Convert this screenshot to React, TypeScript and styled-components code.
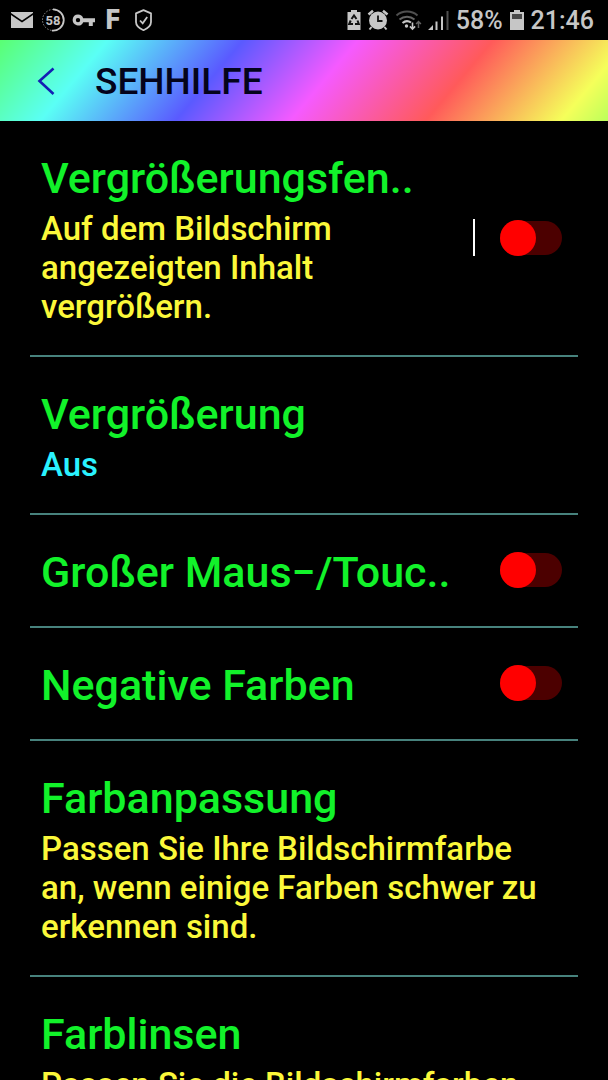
import React from "react";
import styled, { createGlobalStyle } from "styled-components";

const GlobalStyle = createGlobalStyle`
  * { box-sizing: border-box; }
  body {
    margin: 0;
    background: #000;
    font-family: Roboto, "Noto Sans", sans-serif;
  }
`;

const Screen = styled.div`
  display: flex;
  flex-direction: column;
  height: 100vh;
  overflow: hidden;
  background: #000;
`;

const StatusBar = styled.div`
  display: flex;
  flex: none;
  align-items: center;
  justify-content: space-between;
  height: 40px;
  padding: 0 14px 0 11px;
  color: #c6c6c6;
`;

const StatusGroup = styled.div`
  display: flex;
  align-items: center;
  gap: 6px;

  svg { display: block; }
`;

const StatusText = styled.span`
  font-size: 25px;
  font-weight: 500;
  line-height: 40px;
  padding-top: 2px;
`;

const Letter = styled.span`
  width: 24px;
  text-align: center;
  font: bold 27px/40px "DejaVu Sans Condensed", "DejaVu Sans", sans-serif;
`;

const Header = styled.header`
  display: flex;
  flex: none;
  align-items: center;
  height: 81px;
  padding: 0 30px;
  gap: 33px;
  background: linear-gradient(
    130deg,
    #5aff5a -3%,
    #5afff5 16%,
    #5a5aff 36%,
    #f55aff 53%,
    #ff5a5a 73%,
    #f5ff5a 93%,
    #5aff5a 112%
  );
`;

const BackButton = styled.button`
  display: grid;
  place-items: center;
  width: 32px;
  height: 48px;
  padding: 0;
  border: 0;
  background: none;
  color: #1420b4;
`;

const PageTitle = styled.h1`
  margin: 0;
  padding-top: 3px;
  color: #04041c;
  font-size: 37px;
  font-weight: 500;
  line-height: 48px;
`;

const List = styled.ul`
  flex: 1;
  min-height: 0;
  margin: 0;
  padding: 0 30px;
  overflow-y: auto;
  scrollbar-width: none;
  list-style: none;
`;

const Row = styled.li`
  display: flex;
  align-items: center;
  padding: 32px 16px 29px 11px;
  border-bottom: 2px solid #47827d;
`;

const RowText = styled.div`
  flex: 1;
  min-width: 0;
`;

const RowTitle = styled.label`
  display: block;
  color: #12f22a;
  font-size: 43px;
  font-weight: 500;
  line-height: 50px;
  white-space: nowrap;
`;

const RowDetail = styled.p<{ $value?: boolean }>`
  margin: 6px 0 0;
  color: ${({ $value }) => ($value ? "#2af2ff" : "#fbf83a")};
  font-size: 33px;
  font-weight: 500;
  line-height: 39px;
`;

const Separator = styled.span`
  width: 2px;
  height: 37px;
  margin: 0 25px 4px;
  background: #fff;
`;

const Switch = styled.input`
  appearance: none;
  display: flex;
  flex: none;
  align-items: center;
  width: 62px;
  height: 34px;
  margin: 0 0 4px;
  border-radius: 17px;
  background: #4c0000;

  &::before {
    content: "";
    width: 36px;
    height: 36px;
    flex: none;
    border-radius: 50%;
    background: #ff0000;
  }

  &:checked { justify-content: flex-end; }
`;

type Setting = {
  id: string;
  title: string;
  detail?: string;
  value?: boolean;
  toggle?: boolean;
  separated?: boolean;
};

const settings: Setting[] = [
  {
    id: "window",
    title: "Vergrößerungsfen..",
    detail: "Auf dem Bildschirm angezeigten Inhalt vergrößern.",
    toggle: true,
    separated: true,
  },
  { id: "zoom", title: "Vergrößerung", detail: "Aus", value: true },
  { id: "pointer", title: "Großer Maus−/Touc..", toggle: true },
  { id: "negative", title: "Negative Farben", toggle: true },
  {
    id: "adjust",
    title: "Farbanpassung",
    detail: "Passen Sie Ihre Bildschirmfarbe an, wenn einige Farben schwer zu erkennen sind.",
  },
  { id: "lens", title: "Farblinsen", detail: "Passen Sie die Bildschirmfarben" },
];

const MailIcon = () => (
  <svg width="24" height="24" viewBox="0 0 24 24" fill="currentColor">
    <path d="M0 4h22v1L11 12.500 0 5zM0 7l11 7.500L22 7v13H0z" />
  </svg>
);

const GaugeIcon = () => (
  <svg width="24" height="24" viewBox="0 0 24 24" fill="none" stroke="currentColor">
    <circle cx="12" cy="12" r="10.500" strokeWidth="1" strokeDasharray="1.500 1.500" opacity="0.7" />
    <path d="M12 1.300A10.700 10.700 0 1 1 11 22.650" strokeWidth="1.800" />
    <text x="12" y="16.500" textAnchor="middle" fill="currentColor" stroke="none" fontSize="13" fontWeight="700">
      58
    </text>
  </svg>
);

const KeyIcon = () => (
  <svg width="24" height="24" viewBox="0 0 24 24" fill="currentColor">
    <path
      fillRule="evenodd"
      d="M7 6.500a5.500 5.500 0 0 1 5.200 3.700H24v4h-2.200V18h-4v-3.800h-5.600A5.500 5.500 0 1 1 7 6.500zm0 3.400a2.200 2.200 0 1 0 0 4.400 2.200 2.200 0 0 0 0-4.400z"
    />
  </svg>
);

const ShieldIcon = () => (
  <svg width="24" height="24" viewBox="0 0 24 24" fill="none" stroke="currentColor" strokeWidth="1.800">
    <path d="M12.500 2.200 20 5.300V14c0 3.600-3.400 6.400-7.500 8.200C8.400 20.400 5 17.600 5 14V5.300z" strokeLinejoin="round" />
    <path d="m9 12.500 2.700 2.800 4.500-6.300" />
  </svg>
);

const RecycleBatteryIcon = () => (
  <svg width="14" height="22" viewBox="0 0 14 22">
    <path d="M4 1h6v2h3.500v18H.5V3H4z" fill="currentColor" />
    <g fill="none" stroke="#111" strokeWidth="2">
      <path d="M4.500 10 7 6.500 9.500 10" />
      <path d="m10.500 11.500 1.300 3.500H8" />
      <path d="M6 15H2.200l1.500-3.500" />
    </g>
  </svg>
);

const AlarmIcon = () => (
  <svg width="22" height="22" viewBox="0 0 22 22" fill="none" stroke="currentColor">
    <circle cx="11" cy="11.500" r="9" fill="currentColor" stroke="none" />
    <path d="M1.500 5.500 6 1.800M20.500 5.500 16 1.800" strokeWidth="2.600" />
    <path d="m4.500 18-2 2.500M17.500 18l2 2.500" strokeWidth="2" />
    <path d="M11 6.500V12h4.500" stroke="#111" strokeWidth="1.800" />
  </svg>
);

const WifiIcon = () => (
  <svg width="27" height="22" viewBox="0 0 27 22" fill="none" stroke="currentColor">
    <path d="M1.500 6.500a16 16 0 0 1 21 0" strokeWidth="2" opacity="0.4" />
    <path d="M4.500 10.500a11.500 11.500 0 0 1 15 0" strokeWidth="2" opacity="0.5" />
    <path d="M7.500 14a7 7 0 0 1 8.500-.5" strokeWidth="2" />
    <circle cx="11.500" cy="17" r="1.700" fill="currentColor" stroke="none" />
    <path d="M17.500 13.500V20m-2.600-2.600 2.600 2.700 2.600-2.700" strokeWidth="1.600" />
    <path d="M23.500 19v-6.500m-2.400 2.600 2.400-2.600 2.400 2.600" strokeWidth="1.500" opacity="0.5" />
  </svg>
);

const SignalIcon = () => (
  <svg width="22" height="22" viewBox="0 0 22 22" fill="currentColor">
    <path d="M0 21l5-5v5zM7.500 12.500h2V21h-2zM13 7.500h2V21h-2z" />
    <path d="M18.500 2h2v19h-2z" opacity="0.4" />
  </svg>
);

const BatteryIcon = () => (
  <svg width="16" height="22" viewBox="0 0 16 22">
    <path d="M5 1h6v2h4v18H1V3h4z" fill="currentColor" />
    <path d="M3 5h10v5H3z" fill="#4a4a4a" />
  </svg>
);

export default function App() {
  return (
    <Screen>
      <GlobalStyle />
      <StatusBar>
        <StatusGroup>
          <MailIcon />
          <GaugeIcon />
          <KeyIcon />
          <Letter>F</Letter>
          <ShieldIcon />
        </StatusGroup>
        <StatusGroup>
          <RecycleBatteryIcon />
          <AlarmIcon />
          <WifiIcon />
          <SignalIcon />
          <StatusText>58%</StatusText>
          <BatteryIcon />
          <StatusText>21:46</StatusText>
        </StatusGroup>
      </StatusBar>
      <Header>
        <BackButton type="button" aria-label="Zurück">
          <svg width="32" height="32" viewBox="0 0 32 32" fill="none" stroke="currentColor" strokeWidth="2.600">
            <path d="M23.500 3.500 9.500 16l14 13" />
          </svg>
        </BackButton>
        <PageTitle>SEHHILFE</PageTitle>
      </Header>
      <List>
        {settings.map((s) => (
          <Row key={s.id}>
            <RowText>
              <RowTitle as={s.toggle ? "label" : "div"} htmlFor={s.toggle ? s.id : undefined}>
                {s.title}
              </RowTitle>
              {s.detail && <RowDetail $value={s.value}>{s.detail}</RowDetail>}
            </RowText>
            {s.separated && <Separator />}
            {s.toggle && <Switch id={s.id} type="checkbox" role="switch" />}
          </Row>
        ))}
      </List>
    </Screen>
  );
}
